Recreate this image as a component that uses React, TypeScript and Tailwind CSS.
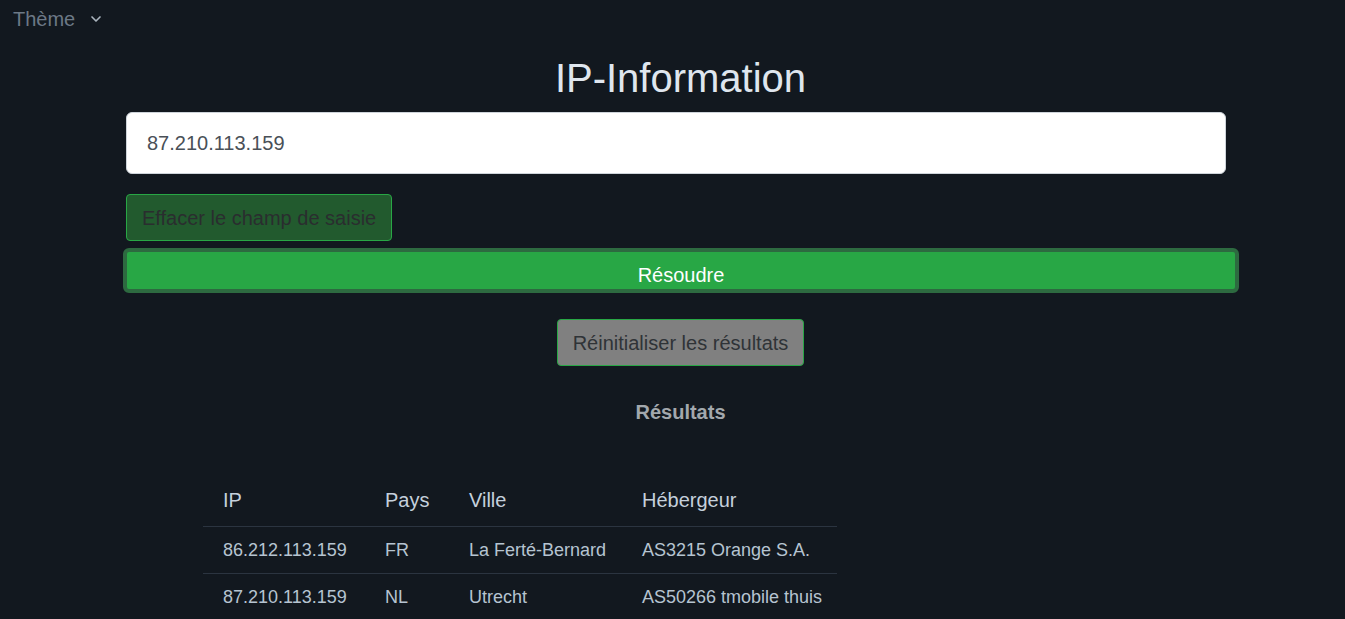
import { ChevronDown } from 'lucide-react'

const rows = [
  { ip: '86.212.113.159', pays: 'FR', ville: 'La Ferté-Bernard', host: 'AS3215 Orange S.A.' },
  { ip: '87.210.113.159', pays: 'NL', ville: 'Utrecht', host: 'AS50266 tmobile thuis' },
]

export default function App() {
  return (
    <div className="min-h-screen bg-[#12181f] font-['Liberation_Sans',Arial,sans-serif]">
      {/* Theme toggle */}
      <div className="flex items-center h-[38px] pl-[13px] text-[20px] text-[#6c7886]">
        <span>Thème</span>
        <ChevronDown className="ml-[13px] w-[16px] h-[16px] text-[#aab4be]" strokeWidth={2.5} />
      </div>

      {/* Main */}
      <div className="flex flex-col">
        <h1 className="text-center text-[40px] leading-[48px] text-[#dfe6ee] mt-[16px] pl-[16px]">IP-Information</h1>

        <div className="ml-[126px] w-[1100px] mt-[10px]">
          <input
            defaultValue="87.210.113.159"
            className="w-full h-[62px] rounded-[6px] bg-white border border-[#ced4da] px-[20px] text-[20px] text-[#495057] outline-none"
          />
          <button className="mt-[20px] h-[47px] px-[15px] rounded-[4px] bg-[#225a2e] border border-[#28a745] text-[20px] text-[#2a2d2f]">
            Effacer le champ de saisie
          </button>
        </div>

        <button className="ml-[123px] w-[1116px] h-[45px] mt-[7px] pt-[8px] rounded-[6px] bg-[#28a745] border-[4px] border-[#2d6a40] text-[20px] text-white">
          Résoudre
        </button>

        <div className="flex justify-center pl-[16px] mt-[26px]">
          <button className="h-[47px] px-[15px] rounded-[4px] bg-[#808080] border border-[#28a745] text-[20px] text-[#2f3337]">
            Réinitialiser les résultats
          </button>
        </div>

        <div className="text-center pl-[16px] mt-[31px] text-[20px] font-bold text-[#a3a8ad]">Résultats</div>

        {/* Table */}
        <table className="ml-[203px] w-[634px] mt-[47px] table-fixed border-collapse text-left whitespace-nowrap">
          <colgroup>
            <col className="w-[182px]" />
            <col className="w-[84px]" />
            <col className="w-[173px]" />
            <col className="w-[195px]" />
          </colgroup>
          <thead>
            <tr className="border-b border-[#2b3440] text-[20px] text-[#c5d0dc]">
              <th className="font-normal pl-[20px] pb-[11px] pt-[11px]">IP</th>
              <th className="font-normal pb-[11px] pt-[11px]">Pays</th>
              <th className="font-normal pb-[11px] pt-[11px]">Ville</th>
              <th className="font-normal pb-[11px] pt-[11px]">Hébergeur</th>
            </tr>
          </thead>
          <tbody>
            {rows.map((r) => (
              <tr key={r.ip} className="border-b border-[#2b3440] text-[18px] text-[#b6c4d1] h-[47px]">
                <td className="pl-[20px]">{r.ip}</td>
                <td>{r.pays}</td>
                <td>{r.ville}</td>
                <td>{r.host}</td>
              </tr>
            ))}
          </tbody>
        </table>
      </div>
    </div>
  )
}
